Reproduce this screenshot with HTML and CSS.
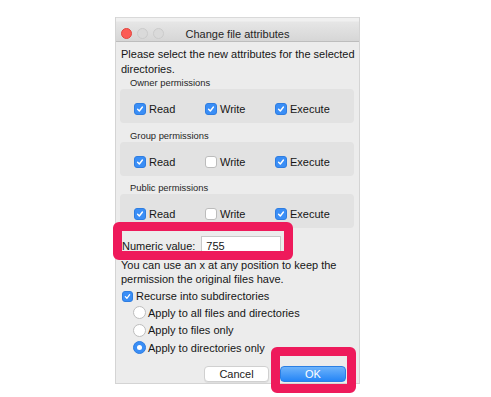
FILE: index.html
```html
<!DOCTYPE html>
<html>
<head>
<meta charset="utf-8">
<title>Change file attributes</title>
<link rel="stylesheet" href="styles.css">
</head>
<body>
<div class="page">
  <div class="dialog">
    <div class="titlebar">
      <div class="lights"><span class="light red"></span><span class="light"></span><span class="light"></span></div>
      <div class="title">Change file attributes</div>
      <div></div>
    </div>
    <div class="content">
      <p class="intro">Please select the new attributes for the selected<br>directories.</p>

      <div class="group-label">Owner permissions</div>
      <div class="group">
        <div class="opt"><span class="cb on"><svg viewBox="0 0 12 12"><path d="M3.1 6.2 5.2 8.4 8.9 3.6"/></svg></span>Read</div>
        <div class="opt"><span class="cb on"><svg viewBox="0 0 12 12"><path d="M3.1 6.2 5.2 8.4 8.9 3.6"/></svg></span>Write</div>
        <div class="opt"><span class="cb on"><svg viewBox="0 0 12 12"><path d="M3.1 6.2 5.2 8.4 8.9 3.6"/></svg></span>Execute</div>
      </div>

      <div class="group-label spaced">Group permissions</div>
      <div class="group">
        <div class="opt"><span class="cb on"><svg viewBox="0 0 12 12"><path d="M3.1 6.2 5.2 8.4 8.9 3.6"/></svg></span>Read</div>
        <div class="opt"><span class="cb"></span>Write</div>
        <div class="opt"><span class="cb on"><svg viewBox="0 0 12 12"><path d="M3.1 6.2 5.2 8.4 8.9 3.6"/></svg></span>Execute</div>
      </div>

      <div class="group-label spaced">Public permissions</div>
      <div class="group">
        <div class="opt"><span class="cb on"><svg viewBox="0 0 12 12"><path d="M3.1 6.2 5.2 8.4 8.9 3.6"/></svg></span>Read</div>
        <div class="opt"><span class="cb"></span>Write</div>
        <div class="opt"><span class="cb on"><svg viewBox="0 0 12 12"><path d="M3.1 6.2 5.2 8.4 8.9 3.6"/></svg></span>Execute</div>
      </div>

      <div class="numeric">
        <span>Numeric value:</span>
        <span class="field">755</span>
      </div>

      <p class="note">You can use an x at any position to keep the<br>permission the original files have.</p>

      <div class="recurse"><span class="cb small on"><svg viewBox="0 0 12 12"><path d="M3.1 6.2 5.2 8.4 8.9 3.6"/></svg></span>Recurse into subdirectories</div>
      <div class="radio"><span class="rb"></span>Apply to all files and directories</div>
      <div class="radio"><span class="rb"></span>Apply to files only</div>
      <div class="radio"><span class="rb on"></span>Apply to directories only</div>

      <div class="buttons">
        <div class="btn">Cancel</div>
        <div class="btn primary">OK</div>
      </div>
    </div>
  </div>
  <div class="hl hl-numeric"></div>
  <div class="hl hl-ok"></div>
</div>
</body>
</html>
```

FILE: styles.css
```css
html, body {
  margin: 0;
  padding: 0;
  background: #ffffff;
}

.page {
  position: relative;
  width: 491px;
  height: 397px;
  overflow: hidden;
  padding-top: 17px;
  box-sizing: border-box;
  font-family: "Liberation Sans", Arial, sans-serif;
  font-size: 11px;
  color: #161616;
}

.dialog {
  width: 245px;
  height: 367px;
  margin-left: 115px;
  box-sizing: border-box;
  background: #ececec;
  border-left: 1px solid #d4d4d4;
  border-right: 1px solid #d4d4d4;
  border-bottom: 1px solid #d4d4d4;
  display: flex;
  flex-direction: column;
}

.titlebar {
  height: 25px;
  box-sizing: border-box;
  padding-top: 8px;
  border-top: 1px solid #d9d9d9;
  border-bottom: 1px solid #bdbdbd;
  background: linear-gradient(#f0f0f0 0, #f0f0f0 3px, #e6e6e6 4px, #d6d6d6 100%);
  display: grid;
  grid-template-columns: 1fr auto 1fr;
  align-items: center;
}

.lights {
  display: flex;
  gap: 5px;
  padding-left: 5px;
}

.light {
  width: 11px;
  height: 11px;
  box-sizing: border-box;
  border-radius: 50%;
  background: #dadada;
  border: 1px solid #cbcbcb;
}

.light.red {
  background: #fc5b55;
  border-color: #e2463f;
}

.title {
  font-size: 11px;
  color: #262626;
  white-space: nowrap;
}

.content {
  flex: 1;
  padding: 5px 5px 0 4px;
  display: flex;
  flex-direction: column;
}

.intro {
  margin: 0;
  padding-left: 1px;
  line-height: 15px;
  white-space: nowrap;
}

.group-label {
  font-size: 9.4px;
  line-height: 12px;
  padding-left: 10px;
  color: #262626;
}

.group-label.spaced {
  margin-top: 6.5px;
}

.group {
  height: 34px;
  box-sizing: border-box;
  padding: 6px 0 0 14px;
  background: #e2e2e2;
  border-radius: 4px;
  display: grid;
  grid-template-columns: 71px 70px auto;
}

.opt {
  height: 28px;
  display: flex;
  align-items: center;
  gap: 3px;
}

.cb {
  width: 12px;
  height: 12px;
  box-sizing: border-box;
  border-radius: 3px;
  background: #ffffff;
  border: 1px solid #bcbcbc;
  display: inline-flex;
  flex: none;
}

.cb.on {
  background: #3a8ef6;
  border-color: #2f7de0;
}

.cb.small {
  width: 11px;
  height: 11px;
}

.cb svg {
  width: 100%;
  height: 100%;
  fill: none;
  stroke: #ffffff;
  stroke-width: 1.7;
  stroke-linecap: round;
  stroke-linejoin: round;
}

.numeric {
  margin-top: 8px;
  height: 19px;
  padding-left: 2px;
  display: flex;
  align-items: center;
}

.field {
  width: 80px;
  height: 19px;
  box-sizing: border-box;
  margin-left: 6px;
  padding-left: 4px;
  background: #ffffff;
  border: 1px solid #c8c8c8;
  display: flex;
  align-items: center;
}

.note {
  margin: 3px 0 0 0;
  padding-left: 1px;
  line-height: 14px;
  white-space: nowrap;
}

.recurse {
  margin-top: 2px;
  height: 16px;
  padding-left: 2px;
  display: flex;
  align-items: center;
  gap: 3px;
}

.radio {
  height: 17.5px;
  padding-left: 13px;
  display: flex;
  align-items: center;
  gap: 2px;
}

.rb {
  width: 13px;
  height: 13px;
  box-sizing: border-box;
  border-radius: 50%;
  background: #ffffff;
  border: 1px solid #bdbdbd;
  flex: none;
  display: flex;
  align-items: center;
  justify-content: center;
}

.rb.on {
  background: #3a8ef6;
  border-color: #2f7de0;
}

.rb.on::after {
  content: "";
  width: 5px;
  height: 5px;
  border-radius: 50%;
  background: #ffffff;
}

.buttons {
  margin-top: 9.5px;
  padding-right: 8px;
  display: flex;
  justify-content: flex-end;
  gap: 11px;
}

.btn {
  height: 16px;
  box-sizing: border-box;
  border-radius: 4px;
  display: flex;
  align-items: center;
  justify-content: center;
  font-size: 11px;
}

.btn:first-child {
  width: 65px;
  background: #ffffff;
  border: 1px solid #d0d0d0;
  box-shadow: 0 1px 0 rgba(0, 0, 0, 0.06);
  color: #222;
}

.btn.primary {
  width: 66px;
  background: linear-gradient(#6db3fb, #2585f6);
  border: 1px solid #2a7fe4;
  color: #ffffff;
}

.hl {
  position: absolute;
  box-sizing: border-box;
  border: 9px solid #ee1a5b;
  border-radius: 6px;
}

.hl-numeric {
  left: 113px;
  top: 222px;
  width: 180px;
  height: 38px;
}

.hl-ok {
  left: 271px;
  top: 347px;
  width: 85px;
  height: 46px;
}
```
